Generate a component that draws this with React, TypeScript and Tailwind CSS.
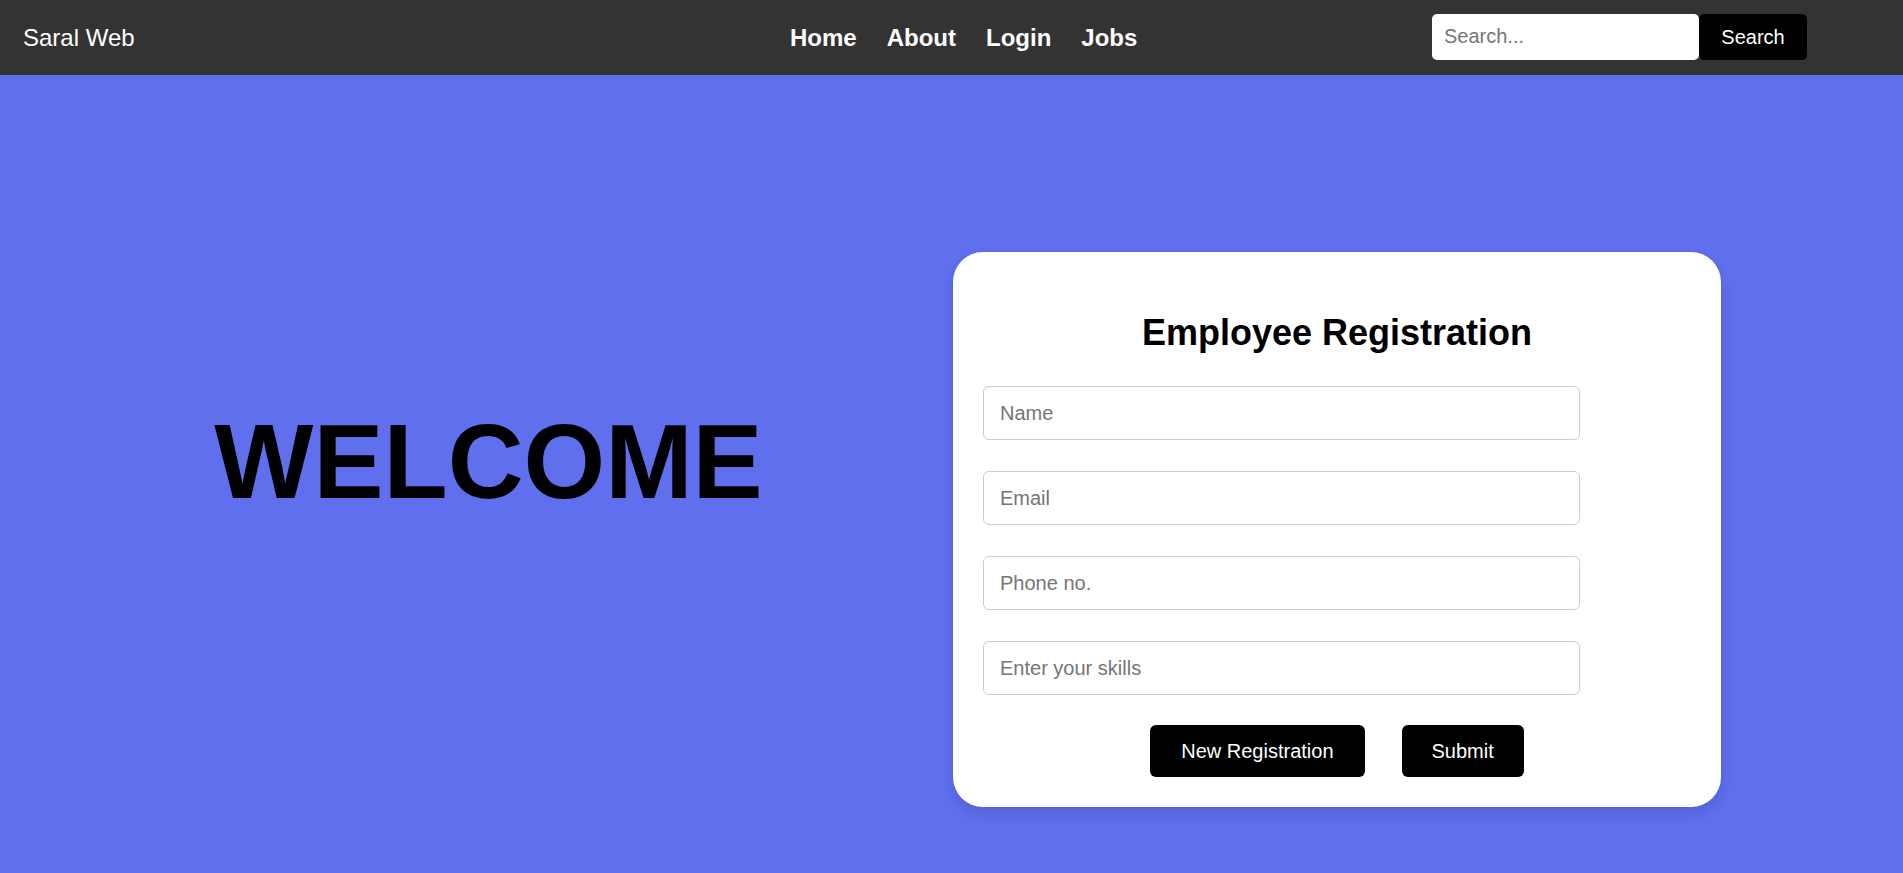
import React from 'react';

const font = { fontFamily: '"Liberation Sans", Arial, sans-serif' };

function Navbar() {
  return (
    <nav className="flex h-[75px] items-center bg-[#333333] pl-[23px] text-white">
      <div className="w-[767px] text-[24px] leading-none">Saral Web</div>
      <ul className="flex items-center gap-[30px] text-[24px] font-bold leading-none">
        <li>Home</li>
        <li>About</li>
        <li>Login</li>
        <li>Jobs</li>
      </ul>
      <form className="mb-[2px] ml-auto mr-[96px] flex items-center" onSubmit={(e) => e.preventDefault()}>
        <input
          type="text"
          placeholder="Search..."
          className="h-[46px] w-[267px] rounded-[5px] bg-white px-[12px] text-[20px] text-black outline-none placeholder:text-[#757575]"
        />
        <button type="submit" className="h-[46px] w-[108px] rounded-[5px] bg-black text-[20px] text-white">
          Search
        </button>
      </form>
    </nav>
  );
}

function Field({ placeholder }: { placeholder: string }) {
  return (
    <input
      type="text"
      placeholder={placeholder}
      className="h-[54px] w-[597px] rounded-[6px] border border-[#cccccc] bg-white px-[16px] text-[20px] text-black outline-none placeholder:text-[#757575]"
    />
  );
}

function RegistrationCard() {
  return (
    <div className="mt-[177px] h-[555px] w-[768px] rounded-[30px] bg-white px-[30px] pt-[30px] shadow-[0_6px_14px_rgba(0,0,0,0.12)]">
      <h2 className="mt-[30px] mb-[33px] text-center text-[36px] font-bold leading-[41px] text-black">
        Employee Registration
      </h2>
      <div className="flex flex-col gap-[31px]">
        <Field placeholder="Name" />
        <Field placeholder="Email" />
        <Field placeholder="Phone no." />
        <Field placeholder="Enter your skills" />
      </div>
      <div className="mt-[30px] flex justify-center gap-[37px]">
        <button type="button" className="h-[52px] rounded-[6px] bg-black px-[31px] text-[20px] text-white">
          New Registration
        </button>
        <button type="button" className="h-[52px] rounded-[6px] bg-black px-[30px] text-[20px] text-white">
          Submit
        </button>
      </div>
    </div>
  );
}

export default function App() {
  return (
    <div className="min-h-screen bg-[#5f6fee]" style={font}>
      <Navbar />
      <main className="flex pb-[66px]">
        <div className="flex w-[953px] justify-center pl-[24px] pt-[327px]">
          <h1 className="text-[105px] font-bold leading-[120px] text-black">WELCOME</h1>
        </div>
        <RegistrationCard />
      </main>
    </div>
  );
}
